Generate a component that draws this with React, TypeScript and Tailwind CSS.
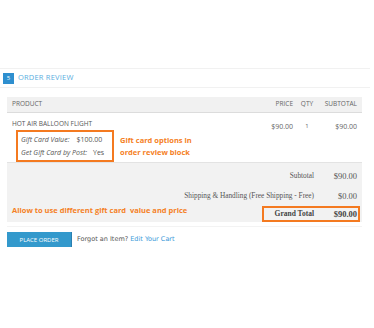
import React from "react";

export default function App() {
  const sans = { fontFamily: '"Open Sans", "Liberation Sans", sans-serif' };
  const serif = { fontFamily: '"Liberation Serif", "DejaVu Serif", serif' };
  const verdana = { fontFamily: '"DejaVu Sans", "Liberation Sans", sans-serif' };
  return (
    <div className="w-[374px] h-[328px] bg-white overflow-hidden pt-[68px]" style={sans}>
      <div className="w-[370px] border-t border-b border-[#f1f1f1] h-[20px] flex items-center pl-[3px]">
        <div className="w-[11px] h-[11px] bg-[#2e8fcf] text-white text-[6px] flex items-center justify-center leading-none">5</div>
        <div className="ml-[4px] text-[7.5px] text-[#5aaee0] leading-none tracking-[0.2px]">ORDER REVIEW</div>
      </div>

      <div className="ml-[7px] mt-[9px] w-[355px]">
        {/* header */}
        <div className="h-[16px] bg-[#f1f1f1] border-b border-[#dcdcdc] flex items-center text-[6.5px] text-[#666] leading-none">
          <div className="w-[246px] pl-[5px]">PRODUCT</div>
          <div className="w-[40px] text-right">PRICE</div>
          <div className="w-[3px]" />
          <div className="w-[22px] text-center">QTY</div>
          <div className="w-[44px] pr-[5px] text-right">SUBTOTAL</div>
        </div>

        {/* item row */}
        <div className="h-[50px] border-b border-[#e3e3e3] flex items-start">
          <div className="w-[246px] pl-[5px] pt-[8px]">
            <div className="text-[6.5px] text-[#555] leading-none">HOT AIR BALLOON FLIGHT</div>
            <div className="flex items-start mt-[2px]">
              <div className="w-[98px] h-[32px] border-2 border-[#f47a20] ml-[4px] pl-[3px] pt-[1px] text-[7px] text-[#555] leading-[13px]">
                <div className="flex">
                  <span className="italic">Gift Card Value:</span>
                  <span className="ml-[7px]">$100.00</span>
                </div>
                <div className="flex">
                  <span className="italic">Get Gift Card by Post:</span>
                  <span className="ml-[6px]">Yes</span>
                </div>
              </div>
              <div className="ml-[6px] pt-[4px] text-[7.5px] font-bold text-[#f58025] leading-[12px]">
                <div>Gift card options in</div>
                <div>order review block</div>
              </div>
            </div>
          </div>
          <div className="w-[40px] text-right text-[7px] text-[#666] pt-[10px] leading-none">$90.00</div>
          <div className="w-[3px]" />
          <div className="w-[22px] text-center text-[6px] text-[#666] pt-[10px] leading-none">1</div>
          <div className="w-[44px] text-right pr-[5px] text-[7px] text-[#666] pt-[10px] leading-none">$90.00</div>
        </div>

        {/* totals */}
        <div className="bg-[#f2f2f2] h-[59px] pt-[4px] text-[#555]">
          <div className="h-[19px] flex items-center justify-end" style={serif}>
            <div className="text-[7.3px]">Subtotal</div>
            <div className="w-[48px] pr-[5px] text-right text-[8.5px]">$90.00</div>
          </div>
          <div className="h-[20px] flex items-center justify-end" style={serif}>
            <div className="text-[7.3px]">Shipping &amp; Handling (Free Shipping - Free)</div>
            <div className="w-[48px] pr-[5px] text-right text-[8.5px]">$0.00</div>
          </div>
          <div className="flex items-start justify-between">
            <div className="pl-[5px] pt-[1px] text-[7.5px] font-bold text-[#f58025] leading-none" style={sans}>
              Allow to use different gift card&nbsp; value and price
            </div>
            <div className="w-[98px] h-[16px] mr-[2px] border-2 border-[#f47a20] flex items-center justify-end text-[#444]" style={serif}>
              <div className="text-[7.5px] font-bold">Grand Total</div>
              <div className="w-[44px] pr-[1px] text-right text-[8.5px] font-bold">$90.00</div>
            </div>
          </div>
        </div>

        <div className="h-[5px] border-b border-[#f3f3f3]" />

        <div className="flex items-center mt-[5px]">
          <div className="w-[65px] h-[15px] bg-[#3399cc] border-r border-[#2b7fb0] text-white text-[6px] flex items-center justify-center leading-none">PLACE ORDER</div>
          <div className="ml-[5px] text-[6.5px] leading-none" style={verdana}>
            <span className="text-[#555]">Forgot an Item? </span>
            <span className="text-[#3a9ad9]">Edit Your Cart</span>
          </div>
        </div>
      </div>
    </div>
  );
}
